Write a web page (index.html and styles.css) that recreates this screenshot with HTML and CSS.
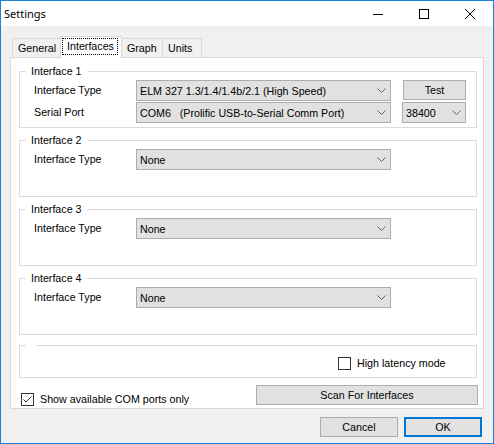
FILE: index.html
```html
<!DOCTYPE html>
<html>
<head>
<meta charset="utf-8">
<link rel="stylesheet" href="styles.css">
</head>
<body>
<div class="window">
  <div class="titlebar">
    <span class="title">Settings</span>
    <div class="caption">
      <span class="cbtn"><svg width="10" height="10" viewBox="0 0 10 10"><line x1="0" y1="5.5" x2="10" y2="5.5" stroke="#000" stroke-width="1"/></svg></span>
      <span class="cbtn"><svg width="10" height="10" viewBox="0 0 10 10"><rect x="0.5" y="0.5" width="9" height="9" fill="none" stroke="#000" stroke-width="1"/></svg></span>
      <span class="cbtn"><svg width="10" height="10" viewBox="0 0 10 10"><path d="M0 0 L10 10 M10 0 L0 10" stroke="#000" stroke-width="1"/></svg></span>
    </div>
  </div>
  <div class="client">
    <div class="tabs">
      <div class="tab t-general">General</div>
      <div class="tab active"><span class="focus">Interfaces</span></div>
      <div class="tab t-graph">Graph</div>
      <div class="tab t-units">Units</div>
    </div>
    <div class="panel">
      <fieldset class="group">
        <legend>Interface 1</legend>
        <div class="rows rows-3">
          <span class="lbl">Interface Type</span>
          <div class="combo"><span>ELM 327 1.3/1.4/1.4b/2.1 (High Speed)</span><svg class="chev" width="9" height="5" viewBox="0 0 9 5"><polyline points="0.5,0.5 4.5,4.5 8.5,0.5" fill="none" stroke="#606060" stroke-width="1"/></svg></div>
          <div class="btn test">Test</div>
          <span class="lbl">Serial Port</span>
          <div class="combo"><span>COM6&nbsp;&nbsp; (Prolific USB-to-Serial Comm Port)</span><svg class="chev" width="9" height="5" viewBox="0 0 9 5"><polyline points="0.5,0.5 4.5,4.5 8.5,0.5" fill="none" stroke="#606060" stroke-width="1"/></svg></div>
          <div class="combo baud"><span>38400</span><svg class="chev" width="9" height="5" viewBox="0 0 9 5"><polyline points="0.5,0.5 4.5,4.5 8.5,0.5" fill="none" stroke="#606060" stroke-width="1"/></svg></div>
        </div>
      </fieldset>
      <fieldset class="group">
        <legend>Interface 2</legend>
        <div class="rows">
          <span class="lbl">Interface Type</span>
          <div class="combo"><span>None</span><svg class="chev" width="9" height="5" viewBox="0 0 9 5"><polyline points="0.5,0.5 4.5,4.5 8.5,0.5" fill="none" stroke="#606060" stroke-width="1"/></svg></div>
        </div>
      </fieldset>
      <fieldset class="group">
        <legend>Interface 3</legend>
        <div class="rows">
          <span class="lbl">Interface Type</span>
          <div class="combo"><span>None</span><svg class="chev" width="9" height="5" viewBox="0 0 9 5"><polyline points="0.5,0.5 4.5,4.5 8.5,0.5" fill="none" stroke="#606060" stroke-width="1"/></svg></div>
        </div>
      </fieldset>
      <fieldset class="group">
        <legend>Interface 4</legend>
        <div class="rows">
          <span class="lbl">Interface Type</span>
          <div class="combo"><span>None</span><svg class="chev" width="9" height="5" viewBox="0 0 9 5"><polyline points="0.5,0.5 4.5,4.5 8.5,0.5" fill="none" stroke="#606060" stroke-width="1"/></svg></div>
        </div>
      </fieldset>
      <fieldset class="group small">
        <legend></legend>
        <div class="latency">
          <span class="check"></span><span class="cbtext">High latency mode</span>
        </div>
      </fieldset>
      <div class="bottom">
        <div class="showcom">
          <span class="check"><svg width="11" height="11" viewBox="0 0 11 11"><polyline points="1.5,5.5 4,8 9.5,2.5" fill="none" stroke="#333" stroke-width="1"/></svg></span><span class="cbtext">Show available COM ports only</span>
        </div>
        <div class="btn scan">Scan For Interfaces</div>
      </div>
    </div>
    <div class="footer">
      <div class="btn dlg">Cancel</div>
      <div class="btn dlg default">OK</div>
    </div>
  </div>
</div>
</body>
</html>
```
FILE: styles.css
```css
html, body {
  margin: 0;
  padding: 0;
  background: #f0f0f0;
}
body {
  width: 494px;
  height: 444px;
  font-family: "Liberation Sans", Arial, sans-serif;
  font-size: 10.7px;
  color: #000;
}
.window {
  width: 494px;
  height: 444px;
  box-sizing: border-box;
  border: 1px solid #1883d7;
  background: #f0f0f0;
  display: flex;
  flex-direction: column;
}
.titlebar {
  height: 25px;
  background: #fff;
  display: flex;
  align-items: center;
  justify-content: space-between;
  flex: none;
}
.title {
  font-family: "Noto Sans", "Liberation Sans", sans-serif;
  font-size: 11px;
  padding-left: 3px;
  padding-bottom: 1px;
}
.caption {
  display: flex;
  height: 25px;
}
.cbtn {
  width: 46px;
  height: 25px;
  display: flex;
  align-items: center;
  justify-content: center;
}
.cbtn svg { display: block; }
.client {
  padding: 10px 9px 0 9px;
  display: flex;
  flex-direction: column;
}
.tabs {
  display: flex;
  align-items: flex-end;
  height: 21px;
  margin-left: 2px;
}
.tab {
  box-sizing: border-box;
  height: 19px;
  border: 1px solid #d9d9d9;
  border-bottom: none;
  background: #f0f0f0;
  display: flex;
  align-items: center;
  padding-left: 5px;
  margin-left: -1px;
}
.t-general { width: 49px; margin-left: 0; }
.t-graph { width: 42px; }
.t-units { width: 40px; }
.tab.active {
  width: 62px;
  height: 22px;
  background: #fff;
  margin-bottom: -1px;
  position: relative;
  z-index: 1;
  padding-left: 2px;
  padding-bottom: 2px;
}
.focus {
  outline: 1px dotted #000;
  padding: 1px 3px 2px 4px;
}
.panel {
  box-sizing: border-box;
  height: 352px;
  border: 1px solid #d9d9d9;
  background: #fff;
  padding: 7px 6px 0 8px;
  display: flex;
  flex-direction: column;
}
.group {
  margin: 0 0 6px 0;
  padding: 0 0 0 6px;
  border: 1px solid #dcdcdc;
  min-width: 0;
  box-sizing: border-box;
  height: 63px;
}
.group.small {
  height: 39px;
  margin-top: -2px;
  margin-bottom: 0;
}
legend {
  padding: 0 5px;
  height: 13px;
  line-height: 13px;
}
.rows {
  padding: 2px 0 0 8px;
  display: grid;
  grid-template-columns: 91px 255px 64px;
  column-gap: 11px;
  row-gap: 1px;
  align-items: center;
}
.lbl {
  line-height: 13px;
}
.combo {
  box-sizing: border-box;
  height: 21px;
  background: #e1e1e1;
  border: 1px solid #adadad;
  display: flex;
  align-items: center;
  justify-content: space-between;
  padding: 0 4px 0 3px;
  white-space: nowrap;
}
.chev { display: block; flex: none; }
.baud { width: 64px; }
.btn {
  box-sizing: border-box;
  background: #e1e1e1;
  border: 1px solid #adadad;
  display: flex;
  align-items: center;
  justify-content: center;
  height: 20px;
}
.test {
  width: 63px;
  justify-self: end;
  align-self: start;
}
.latency {
  display: flex;
  align-items: center;
  padding: 5px 0 0 312px;
}
.check {
  box-sizing: border-box;
  width: 13px;
  height: 13px;
  border: 1px solid #333;
  background: #fff;
  display: flex;
  align-items: center;
  justify-content: center;
  flex: none;
}
.check svg { display: block; }
.cbtext {
  margin-left: 6px;
  line-height: 13px;
}
.bottom {
  display: flex;
  justify-content: space-between;
  align-items: flex-start;
  margin-top: 7px;
  margin-right: -1px;
}
.showcom {
  display: flex;
  align-items: center;
  margin-left: 2px;
  margin-top: 8px;
}
.scan {
  width: 222px;
}
.footer {
  display: flex;
  justify-content: flex-end;
  gap: 6px;
  margin-top: 8px;
  padding-right: 2px;
}
.dlg {
  width: 78px;
}
.default {
  border: 2px solid #0078d7;
}
```
